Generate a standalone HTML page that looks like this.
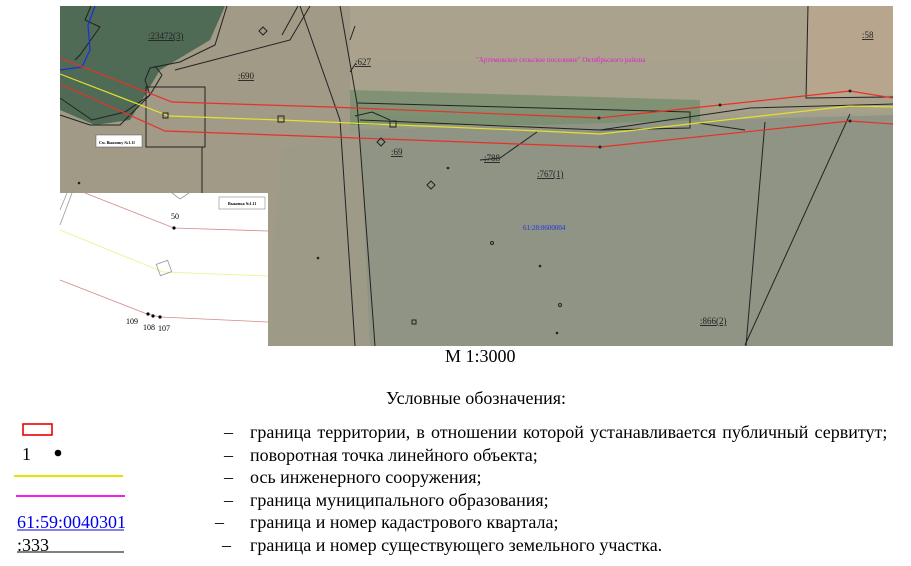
<!DOCTYPE html>
<html><head><meta charset="utf-8"><style>
body{margin:0;width:911px;height:566px;background:#fff;position:relative;overflow:hidden;font-family:"Liberation Serif",serif;color:#000}
.t{position:absolute;font-size:18px;white-space:nowrap;line-height:20px}
.d{position:absolute;font-size:18px;line-height:20px}
</style></head><body>
<svg width="911" height="566" style="position:absolute;left:0;top:0" font-family="Liberation Serif">
<defs>
<linearGradient id="g1" x1="0" y1="0" x2="0" y2="1"><stop offset="0" stop-color="#a7a08c"/><stop offset="0.3" stop-color="#a8a28d"/><stop offset="0.45" stop-color="#7f8f78"/><stop offset="1" stop-color="#8c9284"/></linearGradient>
</defs>
<rect x="60" y="6" width="833" height="340" fill="url(#g1)"/>
<rect x="60" y="6" width="290" height="340" fill="#a09a86"/>
<polygon points="60,6 225,6 210,40 160,70 130,120 95,125 60,110" fill="#4f6a55"/>
<polygon points="808,6 893,6 893,95 808,98" fill="#b7a58e"/>
<polygon points="350,6 808,6 808,60 350,60" fill="#aaa28c"/>
<polygon points="350,90 700,100 700,125 350,125" fill="#6f8a6a" opacity="0.7"/>
<polygon points="360,130 893,115 893,346 360,346" fill="#8f9485"/>
<polygon points="280,150 360,130 370,346 268,346" fill="#9e9a88"/>
<g fill="none" stroke="#222" stroke-width="1">
<path d="M91,6 L85,20 L100,27 L80,55 L75,60"/>
<path d="M227,6 L215,45 L180,62 L150,68 L145,80 L150,95 L120,125 L90,125 L60,115"/>
<path d="M60,98 L92,120 L125,112 L150,95 L162,75 L155,66"/>
<path d="M310,6 L290,40 L175,70"/>
<path d="M298,6 L282,35"/>
<path d="M300,6 L340,120 L355,346"/>
<path d="M340,6 L357,103 L375,346"/>
<path d="M357,103 L690,112 L690,128 L600,130 L360,120"/>
<path d="M355,116 L372,112 L390,120"/>
<path d="M808,6 L806,98 L893,97"/>
<path d="M765,122 L746,346"/>
<path d="M850,114 L745,345 M698,123 L745,130 M600,130 L750,108 L893,104"/>
<path d="M537,132 L500,158 L480,160"/>
<rect x="146" y="87" width="59" height="60"/>
<path d="M202,147 V193"/>
<path d="M355,26 L350,40 M356,63 L350,72"/>
</g>
<polyline fill="none" stroke="#1a2ee0" stroke-width="1.2" points="95,6 88,25 90,50 82,67 60,70"/>
<polyline fill="none" stroke="#e8302a" stroke-width="1.2" points="60,58 172,102 330,107 599,118 720,105 850,91 893,98"/>
<polyline fill="none" stroke="#e8302a" stroke-width="1.2" points="60,84 165,131 330,137 600,147 850,121 893,124"/>
<polyline fill="none" stroke="#e5e030" stroke-width="1.2" points="60,74 169,116 280,120 540,131 600,134 850,106 893,107"/>
<g fill="none" stroke="#222"><rect x="278" y="116" width="6" height="6"/><rect x="390" y="121" width="6" height="6"/><rect x="163" y="113" width="5" height="5"/>
<path d="M263,27 l4,4 -4,4 -4,-4z M431,181 l4,4 -4,4 -4,-4z M381,138 l4,4 -4,4 -4,-4z"/><circle cx="492" cy="243" r="1.5"/><circle cx="560" cy="305" r="1.5"/><rect x="412" y="320" width="4" height="4"/></g>
<g fill="#222"><circle cx="79" cy="183" r="1.3"/><circle cx="318" cy="258" r="1.3"/><circle cx="448" cy="168" r="1.3"/><circle cx="540" cy="266" r="1.3"/><circle cx="557" cy="333" r="1.3"/><circle cx="599" cy="118" r="1.5"/><circle cx="720" cy="105" r="1.5"/><circle cx="600" cy="147" r="1.5"/><circle cx="850" cy="121" r="1.5"/><circle cx="850" cy="91" r="1.5"/></g>
<g font-size="9" fill="#222" text-decoration="underline">
<text x="148" y="39">:23472(3)</text><text x="238" y="79">:690</text><text x="355" y="65">:627</text><text x="391" y="155">:69</text><text x="484" y="161">:788</text><text x="537" y="177">:767(1)</text><text x="700" y="324">:866(2)</text><text x="862" y="38">:58</text>
</g>
<text x="476" y="62" font-size="7" fill="#e020d0">"Артемовское сельское поселение" Октябрьского района</text>
<text x="523" y="230" font-size="7" fill="#2030e0">61:28:0600004</text>
<rect x="96" y="135" width="46" height="12" fill="#fff" stroke="#555" stroke-width="0.5"/>
<text x="99" y="144" font-size="4" font-weight="bold">См. Выкопку №1.11</text>
<rect x="60" y="193" width="208" height="153" fill="#fff"/>
<g fill="none" stroke-width="0.8">
<polyline stroke="#d08a8a" points="85,193 174,228 268,231"/>
<polyline stroke="#eeee88" points="60,230 163,272 268,276"/>
<polyline stroke="#d08a8a" points="60,280 147,314 160,317 268,322"/>
<path stroke="#999" d="M60,225 L72,193 M60,210 L67,193 M172,193 L180,199 L189,193"/>
<rect x="158" y="262" width="12" height="12" stroke="#999" transform="rotate(-20 164 268)"/>
</g>
<g fill="#000"><circle cx="174" cy="228" r="1.6"/><circle cx="148" cy="314" r="1.6"/><circle cx="153" cy="316" r="1.6"/><circle cx="160" cy="317" r="1.6"/></g>
<g font-size="8"><text x="171" y="219">50</text><text x="126" y="324">109</text><text x="143" y="330">108</text><text x="158" y="331">107</text></g>
<rect x="219" y="197" width="46" height="12" fill="#fff" stroke="#888" stroke-width="0.6"/>
<text x="228" y="205" font-size="4" font-weight="bold">Выкопка №1.11</text>
<rect x="23" y="424" width="29" height="11" fill="none" stroke="#e00" stroke-width="1.6"/>
<circle cx="58" cy="453" r="3.3" fill="#000"/>
<line x1="14" y1="476" x2="123" y2="476" stroke="#e8e000" stroke-width="2"/>
<line x1="16" y1="496" x2="125" y2="496" stroke="#f020f0" stroke-width="2"/>
<line x1="17" y1="530" x2="124" y2="530" stroke="#0000ee" stroke-width="1"/>
<line x1="17" y1="552" x2="124" y2="552" stroke="#000" stroke-width="1"/>
</svg>
<div class="t" style="left:445px;top:346px">М 1:3000</div>
<div class="t" style="left:386px;top:388px">Условные обозначения:</div>
<div class="t" style="left:22px;top:444px">1</div>
<div class="t" style="left:17px;top:512px;color:#0000ee">61:59:0040301</div>
<div class="t" style="left:17px;top:535px">:333</div>
<div class="d" style="left:224px;top:422px">–</div>
<div class="d" style="left:224px;top:445px">–</div>
<div class="d" style="left:224px;top:467px">–</div>
<div class="d" style="left:224px;top:490px">–</div>
<div class="d" style="left:215px;top:512px">–</div>
<div class="d" style="left:222px;top:535px">–</div>
<div class="t" style="left:250px;top:422px;word-spacing:1.6px">граница территории, в отношении которой устанавливается публичный сервитут;</div>
<div class="t" style="left:250px;top:445px">поворотная точка линейного объекта;</div>
<div class="t" style="left:250px;top:467px">ось инженерного сооружения;</div>
<div class="t" style="left:250px;top:490px">граница муниципального образования;</div>
<div class="t" style="left:250px;top:512px">граница и номер кадастрового квартала;</div>
<div class="t" style="left:250px;top:535px">граница и номер существующего земельного участка.</div>
</body></html>
